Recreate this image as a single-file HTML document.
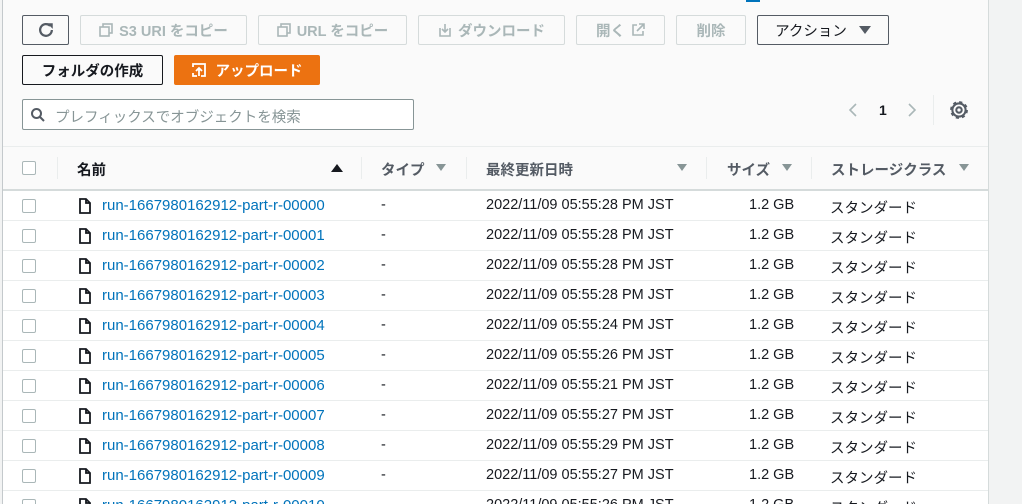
<!DOCTYPE html><html><head><meta charset="utf-8"><style>
*{box-sizing:border-box;margin:0;padding:0}
html{width:1022px;height:504px;overflow:hidden}
body{width:1022px;height:504px;overflow:hidden;background:#f2f3f3;font-family:"Liberation Sans","Noto Sans CJK JP",sans-serif;font-size:14px;color:#16191f;position:relative}
.panel{position:absolute;left:2px;top:0;width:987px;height:504px;background:#fafafa;border-left:1px solid #c4c9cc;border-right:1px solid #d5dbdb}
.a{position:absolute}
.btn{position:absolute;height:30px;border:1px solid #d5dbdb;border-radius:2px;background:#fafafa;color:#aab7b8;font-weight:bold;display:flex;align-items:center;justify-content:center;font-size:14.5px;gap:6px}
.dk{border-color:#545b64;color:#16191f;background:#fafafa}
.cb{position:absolute;width:14px;height:14px;border:1px solid #aab7b8;border-radius:2px;background:#fff}
.row{position:absolute;left:3px;width:985px;height:30px;border-bottom:1px solid #eaeded;background:#fff}
.t{position:absolute;font-size:14.5px;white-space:nowrap}
.lnk{color:#0073bb;font-size:15px}
.hd{position:absolute;top:159px;font-size:14.5px;color:#545b64;font-weight:bold}
.dv{position:absolute;top:157px;width:1px;height:22px;background:#eaeded}
.tri{position:absolute;top:164px;width:0;height:0;border-left:5px solid transparent;border-right:5px solid transparent;border-top:7px solid #879596}
</style></head><body>
<div class="panel"></div>
<div class="a" style="left:746px;top:0;width:14px;height:2px;background:#0073bb"></div>
<div class="btn dk" style="left:22px;top:15px;width:47px"><svg width="18" height="18" viewBox="0 0 16 16"><path d="M13.2 8a5.2 5.2 0 1 1-1.5-3.7" fill="none" stroke="#545b64" stroke-width="2"/><path d="M9 2h5v5z" fill="#545b64"/></svg></div>
<div class="btn" style="left:80px;top:15px;width:167px"><svg width="14" height="14"><rect x="4" y="1" width="9" height="9" fill="none" stroke="#aab7b8" stroke-width="1.6"/><rect x="1" y="4" width="9" height="9" fill="#fafafa" stroke="#aab7b8" stroke-width="1.6"/></svg>S3 URI をコピー</div>
<div class="btn" style="left:258px;top:15px;width:149px"><svg width="14" height="14"><rect x="4" y="1" width="9" height="9" fill="none" stroke="#aab7b8" stroke-width="1.6"/><rect x="1" y="4" width="9" height="9" fill="#fafafa" stroke="#aab7b8" stroke-width="1.6"/></svg>URL をコピー</div>
<div class="btn" style="left:418px;top:15px;width:147px"><svg width="14" height="14"><path d="M2 5v8h10V5M7 1v8M4 6l3 3 3-3" fill="none" stroke="#aab7b8" stroke-width="1.6"/></svg>ダウンロード</div>
<div class="btn" style="left:576px;top:15px;width:89px">開く <svg width="14" height="14"><path d="M6 2H2v10h10V8M8 1h5v5M13 1L6 8" fill="none" stroke="#aab7b8" stroke-width="1.6"/></svg></div>
<div class="btn" style="left:676px;top:15px;width:70px">削除</div>
<div class="btn dk" style="left:757px;top:15px;width:132px;font-weight:normal;color:#16191f;gap:12px">アクション <span style="display:inline-block;border-left:6px solid transparent;border-right:6px solid transparent;border-top:8px solid #545b64"></span></div>
<div class="btn dk" style="left:22px;top:55px;width:141px;border-color:#16191f">フォルダの作成</div>
<div class="btn" style="left:174px;top:55px;width:146px;background:#ec7211;border-color:#ec7211;color:#fff;gap:10px"><svg width="14" height="14"><path d="M1 4V1h12v12H9M5 13H1v-3" fill="none" stroke="#fff" stroke-width="1.8"/><path d="M7 13V6M4 8l3-3 3 3" fill="none" stroke="#fff" stroke-width="1.8"/></svg>アップロード</div>
<div class="a" style="left:22px;top:99px;width:392px;height:31px;border:1px solid #879596;border-radius:2px;background:#fff"></div>
<svg class="a" style="left:30px;top:107px" width="16" height="16"><circle cx="6.5" cy="6.5" r="4.5" fill="none" stroke="#545b64" stroke-width="2"/><path d="M10 10l4 4" stroke="#545b64" stroke-width="2"/></svg>
<div class="a" style="left:55px;top:106px;color:#879596;font-size:14.5px">プレフィックスでオブジェクトを検索</div>
<svg class="a" style="left:847px;top:102px" width="12" height="16"><path d="M9 2L3 8l6 6" fill="none" stroke="#aab7b8" stroke-width="1.6"/></svg>
<div class="a" style="left:879px;top:102px;font-weight:bold">1</div>
<svg class="a" style="left:906px;top:102px" width="12" height="16"><path d="M3 2l6 6-6 6" fill="none" stroke="#aab7b8" stroke-width="1.6"/></svg>
<div class="a" style="left:933px;top:95px;width:1px;height:30px;background:#eaeded"></div>
<svg class="a" style="left:948px;top:99px" width="22" height="22" viewBox="0 0 18 18"><circle cx="9" cy="9" r="6" fill="none" stroke="#545b64" stroke-width="2.6" stroke-dasharray="2.4 2.3"/><circle cx="9" cy="9" r="5.4" fill="none" stroke="#545b64" stroke-width="1.7"/><circle cx="9" cy="9" r="2.2" fill="none" stroke="#545b64" stroke-width="1.7"/></svg>
<div class="a" style="left:3px;top:146px;width:985px;height:1px;background:#eaeded"></div>
<div class="a" style="left:3px;top:189px;width:985px;height:2px;background:#d5dbdb"></div>
<div class="cb" style="left:22px;top:161px"></div>
<div class="dv" style="left:57px"></div>
<div class="hd" style="left:77px;color:#16191f">名前</div>
<div class="a" style="left:331px;top:164px;border-left:6px solid transparent;border-right:6px solid transparent;border-bottom:8px solid #16191f"></div>
<div class="dv" style="left:361px"></div>
<div class="hd" style="left:381px">タイプ</div><div class="tri" style="left:436px"></div>
<div class="dv" style="left:466px"></div>
<div class="hd" style="left:486px">最終更新日時</div><div class="tri" style="left:677px"></div>
<div class="dv" style="left:706px"></div>
<div class="hd" style="left:727px">サイズ</div><div class="tri" style="left:782px"></div>
<div class="dv" style="left:811px"></div>
<div class="hd" style="left:831px">ストレージクラス</div><div class="tri" style="left:959px"></div>
<div id="rows"></div>
<script>
var t=["05:55:28","05:55:28","05:55:28","05:55:28","05:55:24","05:55:26","05:55:21","05:55:27","05:55:29","05:55:27","05:55:26"],h="";
for(var i=0;i<11;i++){var y=191+30*i;var n=(i<10?'0000'+i:'00010');
h+='<div class="row" style="top:'+y+'px"></div><div class="cb" style="left:22px;top:'+(y+8)+'px"></div>'+
'<svg class="a" style="left:79px;top:'+(y+7)+'px" width="12" height="16"><path d="M1 1h6l4 4v10H1z M7 1v4h4" fill="none" stroke="#16191f" stroke-width="1.8"/></svg>'+
'<div class="a t lnk" style="left:102px;top:'+(y+6)+'px">run-1667980162912-part-r-'+n+'</div>'+
'<div class="a t" style="left:381px;top:'+(y+6)+'px">-</div>'+
'<div class="a t" style="left:486px;top:'+(y+6)+'px">2022/11/09 '+t[i]+' PM JST</div>'+
'<div class="a t" style="left:749px;top:'+(y+6)+'px">1.2 GB</div>'+
'<div class="a t" style="left:830px;top:'+(y+6)+'px">スタンダード</div>';}
document.getElementById("rows").innerHTML=h;
</script>
</body></html>
